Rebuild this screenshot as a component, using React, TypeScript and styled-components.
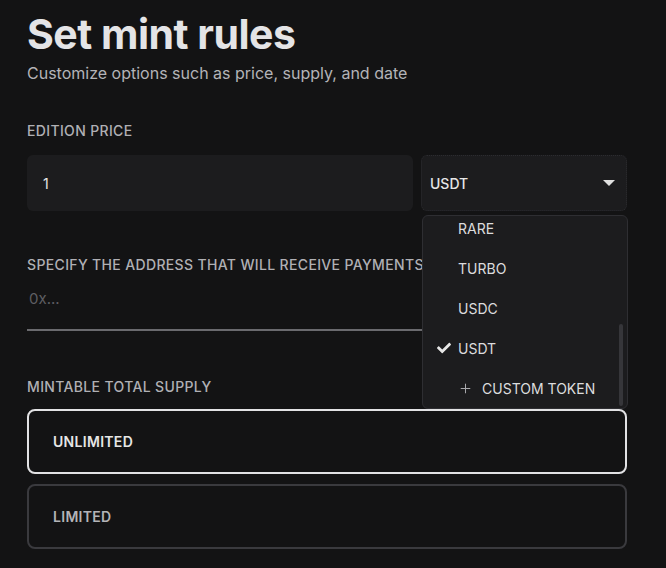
import { useLayoutEffect, useRef } from "react";
import styled, { createGlobalStyle } from "styled-components";
import { FaCheck } from "react-icons/fa";
import { Plus } from "lucide-react";

const GlobalStyle = createGlobalStyle`
  * { box-sizing: border-box; }
  html, body {
    margin: 0;
    background: #131314;
    font-family: Inter, "Noto Sans", sans-serif;
    color: #e6e6e6;
  }
`;

const Page = styled.div`
  width: 600px;
  margin-left: 27px;
  padding-top: 10px;
`;

const Title = styled.h1`
  margin: 0;
  font-size: 41px;
  line-height: 48px;
  font-weight: 700;
  color: #e4e4e6;
  letter-spacing: -0.5px;
`;

const Subtitle = styled.p`
  margin: 3px 0 0;
  font-size: 16px;
  line-height: 24px;
  color: #b4b4b8;
`;

const Section = styled.section<{ $top: number }>`
  margin-top: ${(p) => p.$top}px;
`;

const Label = styled.div`
  font-size: 14px;
  line-height: 16px;
  font-weight: 500;
  letter-spacing: 0.35px;
  text-transform: uppercase;
  color: #b0b0b4;
  white-space: nowrap;
`;

const PriceRow = styled.div`
  display: flex;
  gap: 8px;
  margin-top: 16px;
`;

const NumberInput = styled.div`
  flex: 1;
  height: 56px;
  display: flex;
  align-items: center;
  padding: 0 16px;
  background: #1c1c1e;
  border-radius: 6px;
  font-size: 14px;
  color: #e6e6e6;
`;

const SelectWrap = styled.div`
  position: relative;
  width: 206px;
`;

const SelectBox = styled.div`
  height: 56px;
  display: flex;
  align-items: center;
  justify-content: space-between;
  padding: 0 11px 0 8px;
  background: #1c1c1e;
  border: 1px dotted #2c2c30;
  border-radius: 6px;
  font-size: 14px;
  font-weight: 500;
  color: #e6e6e6;
`;

const Caret = styled.span`
  width: 0;
  height: 0;
  border-left: 6px solid transparent;
  border-right: 6px solid transparent;
  border-top: 6px solid #e0e0e0;
`;

const Menu = styled.div`
  position: absolute;
  top: calc(100% + 4px);
  left: 1px;
  width: 206px;
  height: 194px;
  background: #1c1c1e;
  border: 1px solid #2e2e32;
  border-radius: 6px;
  overflow: hidden;
  z-index: 2;
`;

const OptionList = styled.ul`
  height: 100%;
  margin: 0;
  padding: 14px 0 0;
  list-style: none;
  overflow: hidden;
`;

const ScrollThumb = styled.div`
  position: absolute;
  right: 4px;
  bottom: 2px;
  width: 4px;
  height: 82px;
  border-radius: 2px;
  background: #36363a;
`;

const Option = styled.li`
  height: 40px;
  display: flex;
  align-items: center;
  padding-left: 35px;
  font-size: 14px;
  color: #dcdcde;
  text-transform: uppercase;
`;

const CheckMark = styled.span`
  width: 21px;
  margin-left: -21px;
  display: flex;
  align-items: center;
  color: #e6e6e6;
`;

const AddIcon = styled.span`
  display: flex;
  margin-right: 9px;
  color: #a8a8ac;
`;

const AddressInput = styled.div`
  margin-top: 18px;
  height: 40px;
  padding: 0 2px;
  font-size: 15px;
  line-height: 16px;
  color: #5e5e62;
  border-bottom: 2px solid #6a6a6e;
`;

const SupplyList = styled.div`
  display: flex;
  flex-direction: column;
  gap: 10px;
  margin-top: 14px;
`;

const SupplyOption = styled.div<{ $active?: boolean }>`
  height: 65px;
  display: flex;
  align-items: center;
  padding: 0 24px;
  border: 2px solid ${(p) => (p.$active ? "#e2e2e4" : "#3a3a3e")};
  border-radius: 8px;
  font-size: 14px;
  font-weight: 600;
  letter-spacing: 0.3px;
  color: ${(p) => (p.$active ? "#e6e6e6" : "#b4b4b8")};
`;

const tokens = ["ETH", "WETH", "DAI", "APE", "ENS", "LINK", "RARE", "TURBO", "USDC", "USDT"];

export default function App() {
  const listRef = useRef<HTMLUListElement>(null);

  useLayoutEffect(() => {
    if (listRef.current) listRef.current.scrollTop = listRef.current.scrollHeight;
  }, []);

  return (
    <>
      <GlobalStyle />
      <Page>
        <Title>Set mint rules</Title>
        <Subtitle>Customize options such as price, supply, and date</Subtitle>

        <Section $top={38}>
          <Label>Edition price</Label>
          <PriceRow>
            <NumberInput>1</NumberInput>
            <SelectWrap>
              <SelectBox>
                USDT
                <Caret />
              </SelectBox>
              <Menu>
                <OptionList ref={listRef}>
                  {tokens.map((t) => (
                    <Option key={t}>
                      {t === "USDT" && (
                        <CheckMark>
                          <FaCheck size={14} />
                        </CheckMark>
                      )}
                      {t}
                    </Option>
                  ))}
                  <Option>
                    <AddIcon>
                      <Plus size={15} strokeWidth={1.6} />
                    </AddIcon>
                    Custom token
                  </Option>
                </OptionList>
                <ScrollThumb />
              </Menu>
            </SelectWrap>
          </PriceRow>
        </Section>

        <Section $top={46}>
          <Label>Specify the address that will receive payments</Label>
          <AddressInput>0x...</AddressInput>
        </Section>

        <Section $top={48}>
          <Label>Mintable total supply</Label>
          <SupplyList>
            <SupplyOption $active>UNLIMITED</SupplyOption>
            <SupplyOption>LIMITED</SupplyOption>
          </SupplyList>
        </Section>
      </Page>
    </>
  );
}
